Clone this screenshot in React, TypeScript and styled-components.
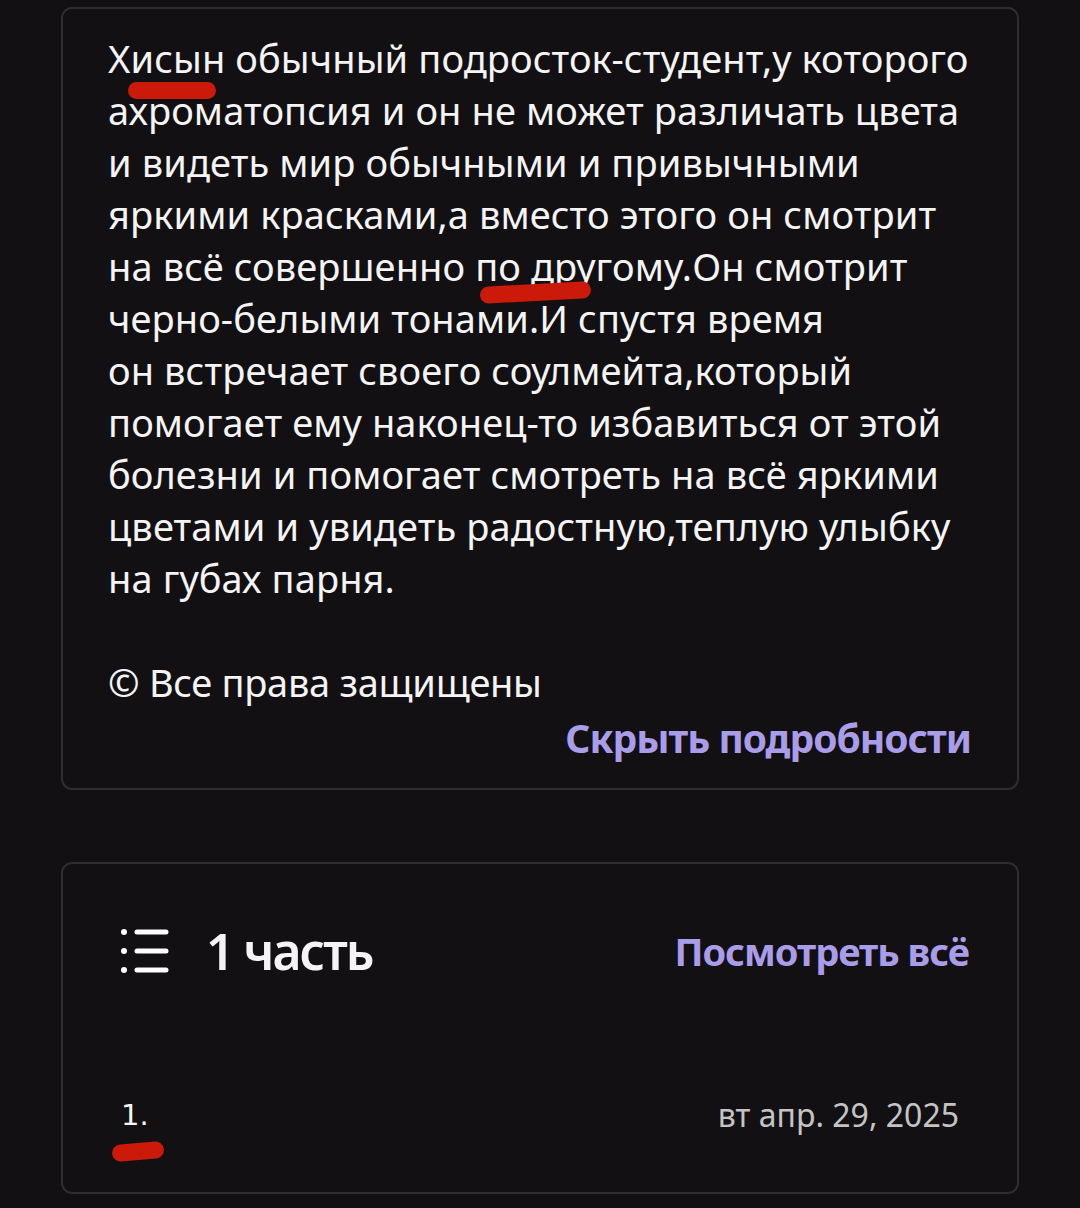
import React from 'react'
import styled, { createGlobalStyle } from 'styled-components'

const GlobalStyle = createGlobalStyle`
  html, body {
    margin: 0;
    padding: 0;
    background: #121013;
  }
  body {
    font-family: "Noto Sans", "Open Sans", sans-serif;
    color: #f4f4f4;
  }
`

const Page = styled.div`
  position: relative;
  width: 1080px;
  height: 1208px;
  overflow: hidden;
  box-sizing: border-box;
  padding: 7px 61px 0;
  display: flex;
  flex-direction: column;
  gap: 72px;
`

const Card = styled.section<{ $pad: string }>`
  box-sizing: border-box;
  border: 2px solid #2e2d31;
  border-radius: 11px;
  background: #121013;
  padding: ${(p) => p.$pad};
`

const Synopsis = styled.p`
  margin: 0;
  font-size: 38px;
  line-height: 52px;
  letter-spacing: 0.1px;
`

const Rights = styled.p`
  margin: 52px 0 0;
  font-size: 38px;
  line-height: 52px;
  letter-spacing: -0.3px;
`

const LinkRow = styled.div`
  display: flex;
  justify-content: flex-end;
  margin-top: 3px;
`

const PurpleLink = styled.a<{ $size: number }>`
  color: #a99de9;
  font-weight: 700;
  font-size: ${(p) => p.$size}px;
  letter-spacing: -1px;
  text-decoration: none;
  cursor: pointer;
`

const Header = styled.div`
  display: flex;
  align-items: center;
  justify-content: space-between;
  height: 60px;
`

const TitleGroup = styled.div`
  display: flex;
  align-items: center;
  gap: 36px;
`

const Title = styled.h2`
  margin: 0;
  font-size: 50px;
  font-weight: 600;
  letter-spacing: -2px;
`

const ChapterRow = styled.div`
  display: flex;
  justify-content: space-between;
  align-items: center;
  margin-top: 112px;
  padding-right: 10px;
`

const ChapterNum = styled.span`
  font-family: "DejaVu Sans", sans-serif;
  font-size: 29px;
  font-weight: 400;
  padding-left: 1px;
`

const ChapterDate = styled.span`
  font-size: 32px;
  color: #c4c4c4;
  letter-spacing: 0;
`

const Mark = styled.span<{ $x: number; $y: number; $w: number; $h: number; $r: number }>`
  position: absolute;
  left: ${(p) => p.$x}px;
  top: ${(p) => p.$y}px;
  width: ${(p) => p.$w}px;
  height: ${(p) => p.$h}px;
  background: #cc1a0a;
  border-radius: 10px;
  transform: rotate(${(p) => p.$r}deg);
`

const lines = [
  'Хисын обычный подросток-студент,у которого',
  'ахроматопсия и он не может различать цвета',
  'и видеть мир обычными и привычными',
  'яркими красками,а вместо этого он смотрит',
  'на всё совершенно по другому.Он смотрит',
  'черно-белыми тонами.И спустя время',
  'он встречает своего соулмейта,который',
  'помогает ему наконец-то избавиться от этой',
  'болезни и помогает смотреть на всё яркими',
  'цветами и увидеть радостную,теплую улыбку',
  'на губах парня.',
]

function ListIcon() {
  return (
    <svg width="50" height="46" viewBox="0 0 50 46" fill="none">
      <circle cx="4" cy="4" r="3" fill="#fff" />
      <circle cx="4" cy="23" r="3" fill="#fff" />
      <circle cx="4" cy="42" r="3" fill="#fff" />
      <path d="M17 4h29M17 23h29M17 42h29" stroke="#fff" strokeWidth="5" strokeLinecap="round" />
    </svg>
  )
}

export default function App() {
  return (
    <Page>
      <GlobalStyle />
      <Card $pad="23px 46px 24px 45px">
        <Synopsis>
          {lines.map((l, i) => (
            <React.Fragment key={i}>
              {l}
              {i < lines.length - 1 && <br />}
            </React.Fragment>
          ))}
        </Synopsis>
        <Rights>© Все права защищены</Rights>
        <LinkRow>
          <PurpleLink $size={39}>Скрыть подробности</PurpleLink>
        </LinkRow>
      </Card>
      <Card $pad="57px 48px 56px 57px">
        <Header>
          <TitleGroup>
            <ListIcon />
            <Title>1 часть</Title>
          </TitleGroup>
          <PurpleLink $size={38}>Посмотреть всё</PurpleLink>
        </Header>
        <ChapterRow>
          <ChapterNum>1.</ChapterNum>
          <ChapterDate>вт апр. 29, 2025</ChapterDate>
        </ChapterRow>
      </Card>
      <Mark $x={128} $y={82} $w={88} $h={17} $r={0} />
      <Mark $x={480} $y={284} $w={111} $h={17} $r={-3} />
      <Mark $x={112} $y={1143} $w={52} $h={17} $r={-5} />
    </Page>
  )
}
